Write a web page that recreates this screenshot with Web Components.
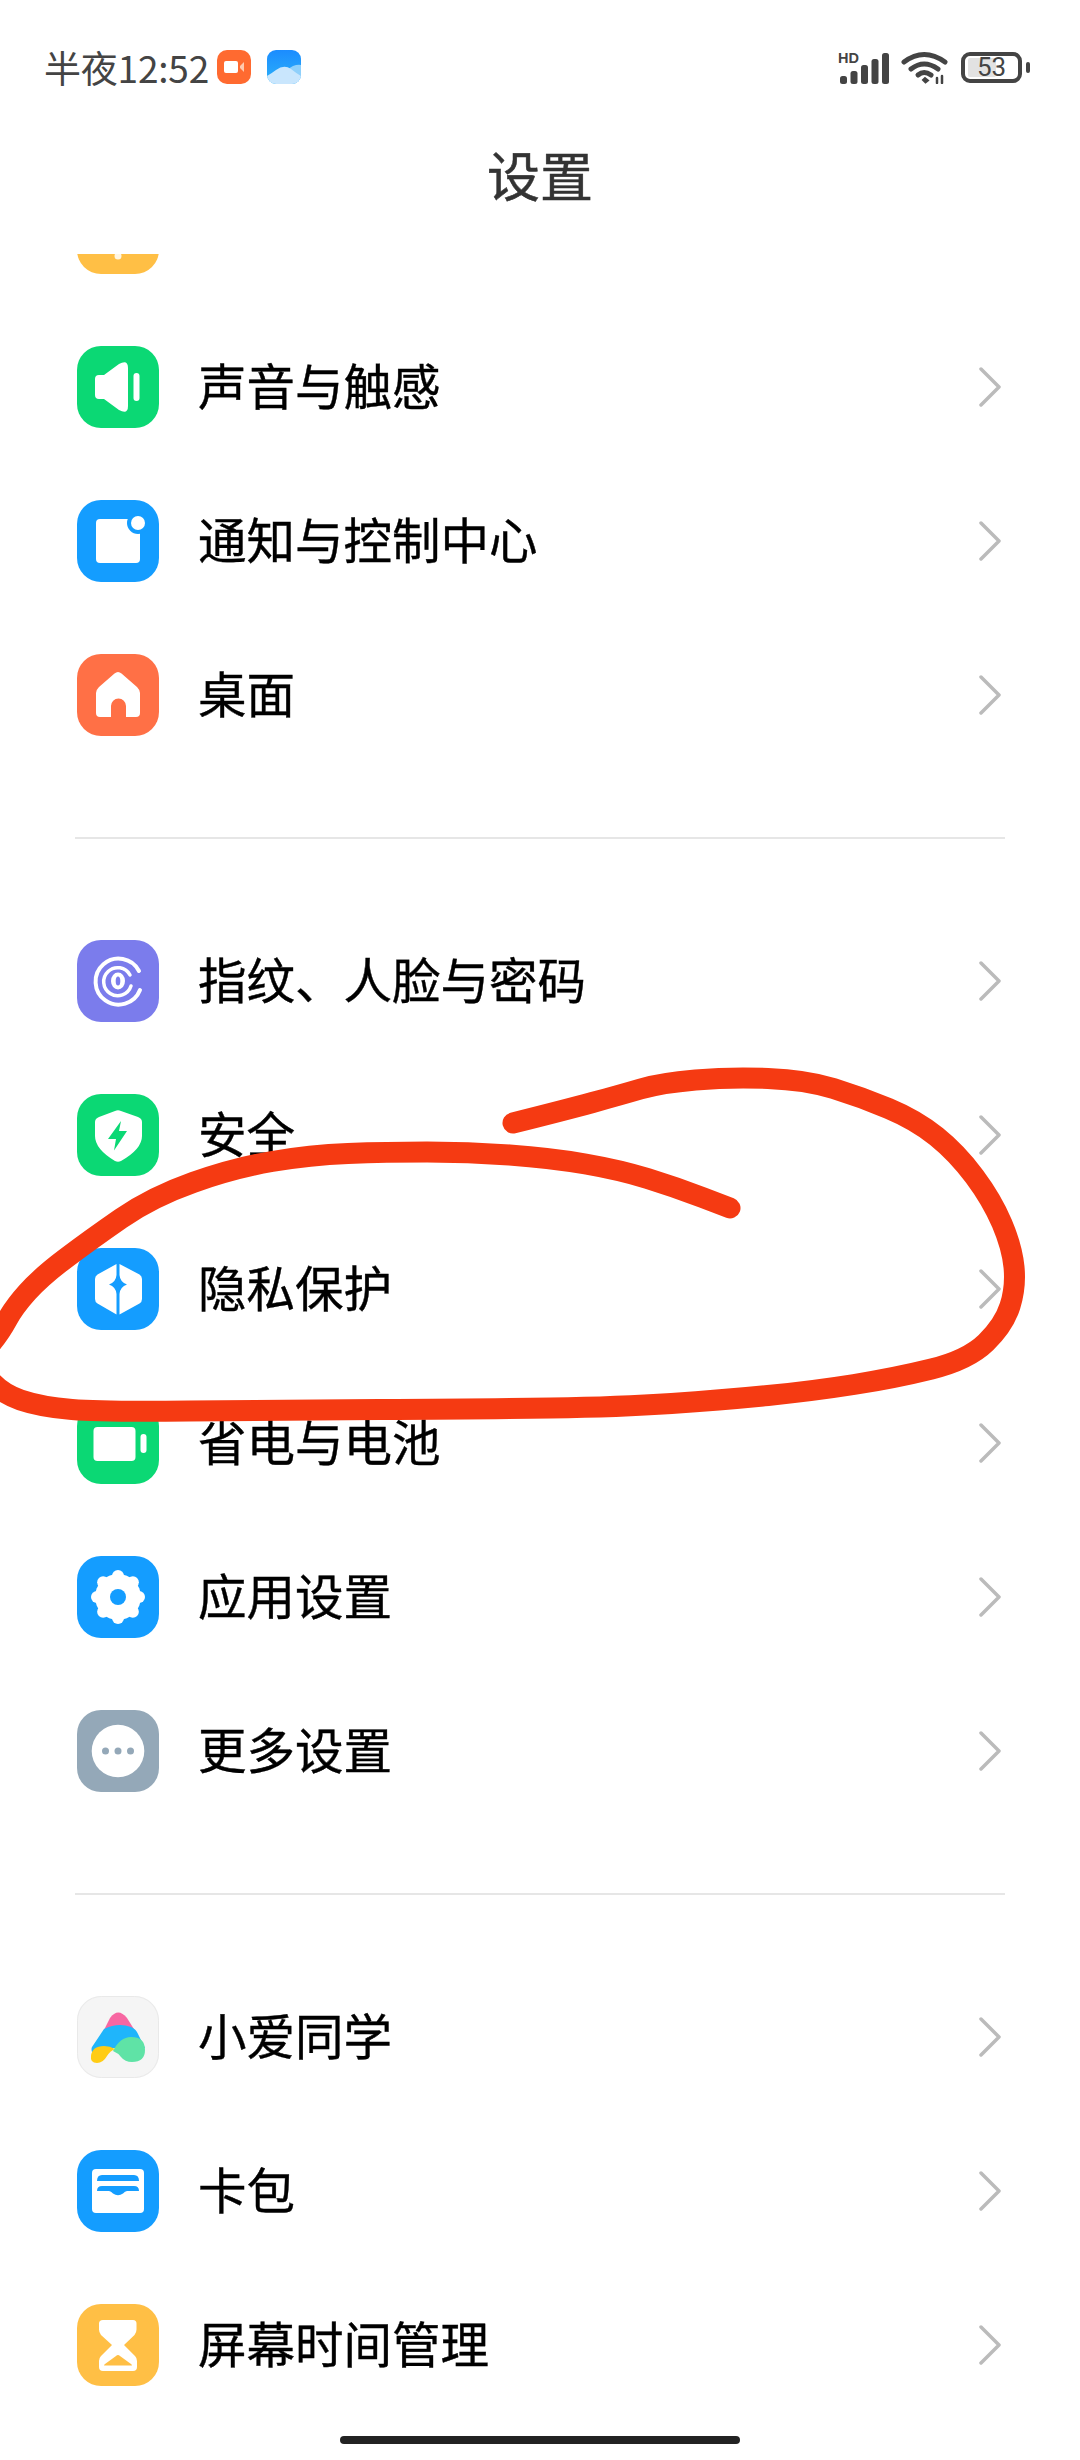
<!DOCTYPE html>
<html lang="zh">
<head>
<meta charset="utf-8">
<title>设置</title>
<style>
html, body { margin: 0; background: #fff; }
body { width: 1080px; height: 2460px; overflow: hidden; position: relative; font-family: "Noto Sans CJK SC", "Noto Sans", sans-serif; }
</style>
</head>
<body>
<settings-page>
    <status-bar slot="status"></status-bar>
    <settings-title slot="title">设置</settings-title>
    <settings-row icon="display" style="--label-lift: 11px">显示与亮度</settings-row>
    <settings-row icon="sound">声音与触感</settings-row>
    <settings-row icon="notify">通知与控制中心</settings-row>
    <settings-row icon="home">桌面</settings-row>
    <settings-divider></settings-divider>
    <settings-row icon="finger">指纹、人脸与密码</settings-row>
    <settings-row icon="shield">安全</settings-row>
    <settings-row icon="privacy">隐私保护</settings-row>
    <settings-row icon="battery">省电与电池</settings-row>
    <settings-row icon="gear">应用设置</settings-row>
    <settings-row icon="more">更多设置</settings-row>
    <settings-divider></settings-divider>
    <settings-row icon="xiaoai">小爱同学</settings-row>
    <settings-row icon="card">卡包</settings-row>
    <settings-row icon="hourglass">屏幕时间管理</settings-row>
</settings-page>
<scribble-mark></scribble-mark>
<home-bar></home-bar>

<script>
const GREEN = "#0bd874";
const BLUE = "#149dff";

// Eight scallops around a disc, for the app settings gear
const lobes = [0, 45, 90, 135, 180, 225, 270, 315].map(a => {
    const r = a * Math.PI / 180;
    return `<circle cx="${41 + 21 * Math.cos(r)}" cy="${41 + 21 * Math.sin(r)}" r="6" fill="#fff"/>`;
}).join("");

// Each icon is drawn in an 82x82 box
const ICONS = {
    display: { bg: "#ffbf45", svg: `<circle cx="41" cy="64" r="3.5" fill="#fff" opacity=".85"/>` },
    sound: { bg: GREEN, svg: `
        <path fill="#fff" d="M22 29h5L42 18q9-5 9 4v38q0 9-9 4L27 53h-5q-4 0-4-4V33q0-4 4-4z"/>
        <rect x="56.500" y="27" width="6" height="28" rx="3" fill="#fff"/>` },
    notify: { bg: BLUE, svg: `
        <rect x="19" y="19" width="44" height="44" rx="4" fill="#fff"/>
        <circle cx="61" cy="23" r="11" fill="${BLUE}"/>
        <circle cx="61" cy="23" r="7" fill="#fff"/>` },
    home: { bg: "#ff7046", svg: `
        <path fill="#fff" d="M37.500 19.500q3.500-3 7 0L60 33q3 3 3 6v20q0 4-4 4H49V52a7.500 7.500 0 0 0-15 0V63H23q-4 0-4-4V39q0-3 3-6z"/>` },
    finger: { bg: "#7b7cec", svg: `
        <g fill="none" stroke="#fff" stroke-linecap="round">
            <path stroke-width="4" d="M62 31a23 23 0 1 0 1 19"/>
            <path stroke-width="3.500" d="M53 35a14 14 0 1 0 1 11"/>
        </g>
        <ellipse cx="41" cy="41" rx="7" ry="8.500" fill="#fff"/>
        <ellipse cx="41" cy="41" rx="2.300" ry="4.500" fill="#7b7cec"/>` },
    shield: { bg: GREEN, svg: `
        <path fill="#fff" d="M38 17q3-1.500 6 0l17 6q4 1.500 4 5v14q0 13-21 25q-3 1.500-6 0Q18 55 18 42V28q0-3.500 4-5z"/>
        <path fill="${GREEN}" d="M44 27L31 45h8L37 56.500L50 37h-8z"/>` },
    privacy: { bg: BLUE, svg: `
        <path fill="#fff" d="M39.500 16V27Q39 34 32 36.500Q39 39 39.500 46V66.500L20.500 55.500Q18 54 18 51V31q0-3 2.500-4.500z"/>
        <path fill="#fff" d="M42.500 16V27Q43 34 50 36.500Q43 39 42.500 46V66.500L62.500 55.500Q65 54 65 51V31q0-3-2.500-4.500z"/>` },
    battery: { bg: GREEN, svg: `
        <rect x="16.500" y="25" width="42" height="34" rx="4" fill="#fff"/>
        <rect x="63.500" y="32" width="6" height="19" rx="3" fill="#fff"/>` },
    gear: { bg: BLUE, svg: `
        <circle cx="41" cy="41" r="23" fill="#fff"/>${lobes}
        <circle cx="41" cy="41" r="8" fill="${BLUE}"/>` },
    more: { bg: "#94a8b8", svg: `
        <circle cx="41" cy="41" r="26.300" fill="#fff"/>
        <circle cx="28.500" cy="41" r="3.500" fill="#94a8b8"/>
        <circle cx="41" cy="41" r="3.500" fill="#94a8b8"/>
        <circle cx="53.500" cy="41" r="3.500" fill="#94a8b8"/>` },
    xiaoai: { bg: "#f5f5f5", border: "#e9e9e9", svg: `
        <path fill="#f767a2" d="M33 22q8-11 17 0L60 38L26 36z"/>
        <path fill="#1fb5fb" d="M27 33q14-7 27-2q5 2 7 7l7 14L36 52q-4 0-7 4l-9 8L15 56q-1-3 0-5z"/>
        <path fill="#5fe3a6" d="M36 55q7-14 18-14q14 0 14 13q0 12-13 12q-7 0-11-5q-3-4-8-6z"/>
        <path fill="#ffcc14" d="M14 60q1-10 13-10q6 0 11 3q-5 2-8 7q-4 7-10 7q-7 0-6-7z"/>` },
    card: { bg: BLUE, svg: `
        <rect x="15" y="19" width="52" height="44" rx="4" fill="#fff"/>
        <path fill="${BLUE}" d="M20 31q0-6 5-6h32q5 0 5 6z"/>
        <path fill="${BLUE}" d="M20 41q0-5 5-5h32q5 0 5 5H50q-2 0-4 2.500q-5 3.500-10 0q-2-2.500-4-2.500z"/>` },
    hourglass: { bg: "#ffbf45", svg: `
        <path fill="#fff" d="M26 16h30q3.500 0 3.500 3.500v6q0 3-2 5.500L47 41l11 11q2 2 2 5v6q0 4-4 4H26q-4 0-4-4v-6q0-3 2-5l11-11L24 31q-2-2.500-2-5.500v-6Q22 16 26 16z"/>
        <path fill="#ffbf45" d="M39 52q2-2 4 0l11 8q2 1.500 0 1.500H28q-2 0-0-1.500z"/>` }
};

class SettingsPage extends HTMLElement {
    constructor() {
        super();
        this.attachShadow({ mode: "open" }).innerHTML = `
<style>
:host { display: block; }
#top { background: #fff; height: 254px; position: relative; z-index: 1; }
#list { height: 2206px; overflow: hidden; }
/* list is scrolled: first row sits partly under the header */
#content { margin-top: -98px; }
</style>
<div id="top">
    <slot name="status"></slot>
    <slot name="title"></slot>
</div>
<div id="list"><div id="content"><slot></slot></div></div>`;
    }
}

class StatusBar extends HTMLElement {
    constructor() {
        super();
        this.attachShadow({ mode: "open" }).innerHTML = `
<style>
:host { display: flex; align-items: center; justify-content: space-between; height: 34px; padding: 50px 50px 0 44px; color: #444; }
#left, #right { display: flex; align-items: center; }
#time { font-size: 37px; line-height: 34px; margin-right: 8px; letter-spacing: -.2px; }
svg { display: block; }
#cloud { margin-left: 16px; }
#signal { margin-right: 12px; }
#wifi { margin-right: 13px; }
#batt { position: relative; width: 61px; height: 31px; box-sizing: border-box; border: 4px solid #444; border-radius: 9px; display: flex; align-items: center; justify-content: center; font: 26px/1 "Roboto", sans-serif; }
#batt i { position: absolute; left: 3px; top: 2px; bottom: 2px; width: 28px; background: #e2e2e2; border-radius: 2px; }
#batt span { position: relative; }
#tip { width: 4px; height: 11px; border-radius: 2px; background: #444; margin-left: 4px; }
</style>
<div id="left">
    <span id="time">半夜12:52</span>
    <svg width="34" height="34" viewBox="0 0 34 34"><rect width="34" height="34" rx="10" fill="#ff6a30"/>
        <rect x="7" y="11" width="14" height="12" rx="2" fill="#fff"/><path d="M23 16l4-4v10l-4-4z" fill="#ffc9ae"/></svg>
    <svg id="cloud" width="34" height="34" viewBox="0 0 34 34">
        <defs><linearGradient id="sky" x1="0" y1="0" x2="0" y2="1"><stop offset="0" stop-color="#1b8cff"/><stop offset="1" stop-color="#2cb2f8"/></linearGradient>
        <clipPath id="round"><rect width="34" height="34" rx="9"/></clipPath></defs>
        <g clip-path="url(#round)"><rect width="34" height="34" fill="url(#sky)"/>
        <path d="M20 20q7-6 14-5v19H20z" fill="#8fd0fb"/>
        <path d="M0 26q5-3 9-6q8-6 15-1q5 4 10 7v8H0z" fill="#c9e6fd"/></g></svg>
</div>
<div id="right">
    <svg id="signal" width="51" height="33" viewBox="0 0 51 33" fill="#444">
        <text x="0" y="12" font-family="Liberation Sans" font-weight="700" font-size="14.500">HD</text>
        <rect x="2" y="25" width="7" height="8" rx="2.500"/><rect x="12.500" y="20" width="7" height="13" rx="2.500"/>
        <rect x="23" y="14" width="7" height="19" rx="2.500"/><rect x="33.500" y="8" width="7" height="25" rx="2.500"/><rect x="44" y="2" width="7" height="31" rx="2.500"/>
    </svg>
    <svg id="wifi" width="47" height="33" viewBox="0 0 47 33" fill="none" stroke="#444" stroke-width="5" stroke-linecap="round">
        <path d="M3 11q20-15 41 0"/><path d="M10 18q13-10 27 0"/><path d="M17 24q6-5 13 0" />
        <path d="M22 29l2-2l3 2.500l-2.500 2z" fill="#444" stroke-width="2"/>
        <path d="M36 27v5M41 25v7" stroke-width="2.500"/>
    </svg>
    <div id="batt"><i></i><span>53</span></div>
    <div id="tip"></div>
</div>`;
    }
}

class SettingsTitle extends HTMLElement {
    constructor() {
        super();
        this.attachShadow({ mode: "open" }).innerHTML = `
<style>
:host { display: block; text-align: center; font-size: 53px; line-height: 76px; color: #333; margin-top: 52px; -webkit-text-stroke: .5px #333; }
</style>
<slot></slot>`;
    }
}

class SettingsRow extends HTMLElement {
    constructor() {
        super();
        const icon = ICONS[this.getAttribute("icon")];
        const border = icon.border ? `<rect x=".5" y=".5" width="81" height="81" rx="24" fill="none" stroke="${icon.border}"/>` : "";
        this.attachShadow({ mode: "open" }).innerHTML = `
<style>
:host { display: flex; align-items: center; height: 154px; padding: 0 79px 0 77px; font-size: 48.500px; color: #000; }
svg { display: block; flex: none; }
#label { flex: 1; margin-left: 39px; line-height: 68px; padding-bottom: var(--label-lift, 6px); -webkit-text-stroke: .4px #000; }
</style>
<svg width="82" height="82" viewBox="0 0 82 82"><rect width="82" height="82" rx="24" fill="${icon.bg}"/>${border}${icon.svg}</svg>
<div id="label"><slot></slot></div>
<svg width="22" height="40" viewBox="0 0 22 40" fill="none" stroke="#bbb" stroke-width="3.500" stroke-linecap="round" stroke-linejoin="round"><path d="M2 2l18 18L2 38"/></svg>`;
    }
}

class SettingsDivider extends HTMLElement {
    constructor() {
        super();
        this.attachShadow({ mode: "open" }).innerHTML = `
<style>
:host { display: block; margin: 65px 75px 65px; height: 2px; background: #e6e6e6; }
</style>`;
    }
}

class ScribbleMark extends HTMLElement {
    constructor() {
        super();
        // Hand drawn circle over the list, smoothed through midpoints
        const pts = [[513,1123],[565,1110],[620,1095],[661,1083],[730,1077],[806,1080],[861,1097],[916,1120],[957,1153],[992,1200],[1012,1247],[1016,1287],[1004,1325],[968,1360],[895,1378],[813,1391],[723,1400],[620,1407],[482,1409],[275,1410],[103,1412],[41,1407],[0,1393],[-24,1362],[0,1333],[14,1307],[41,1277],[90,1240],[152,1197],[234,1168],[310,1155],[386,1152],[468,1152],[551,1158],[620,1170],[675,1187],[730,1208]];
        let d = `M${pts[0][0]} ${pts[0][1]}`;
        for (let i = 1; i < pts.length - 1; i++) {
            const mx = (pts[i][0] + pts[i + 1][0]) / 2;
            const my = (pts[i][1] + pts[i + 1][1]) / 2;
            d += `Q${pts[i][0]} ${pts[i][1]} ${mx} ${my}`;
        }
        d += `L${pts[pts.length - 1][0]} ${pts[pts.length - 1][1]}`;
        this.attachShadow({ mode: "open" }).innerHTML = `
<style>
:host { position: absolute; left: 0; top: 0; width: 1080px; height: 2460px; pointer-events: none; z-index: 2; }
svg { display: block; }
</style>
<svg width="1080" height="2460" viewBox="0 0 1080 2460"><path d="${d}" fill="none" stroke="#f53a12" stroke-width="21" stroke-linecap="round" stroke-linejoin="round"/></svg>`;
    }
}

class HomeBar extends HTMLElement {
    constructor() {
        super();
        this.attachShadow({ mode: "open" }).innerHTML = `
<style>
:host { position: absolute; left: 340px; top: 2436px; width: 400px; height: 8px; border-radius: 4px; background: #222; }
</style>`;
    }
}

customElements.define("settings-page", SettingsPage);
customElements.define("status-bar", StatusBar);
customElements.define("settings-title", SettingsTitle);
customElements.define("settings-row", SettingsRow);
customElements.define("settings-divider", SettingsDivider);
customElements.define("scribble-mark", ScribbleMark);
customElements.define("home-bar", HomeBar);
</script>
</body>
</html>
